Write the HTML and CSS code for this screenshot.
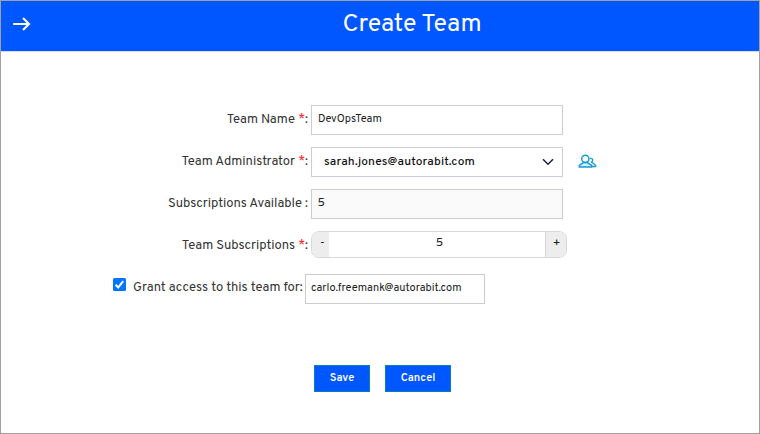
FILE: index.html
```html
<!DOCTYPE html>
<html lang="en">
<head>
<meta charset="utf-8">
<title>Create Team</title>
<link rel="stylesheet" href="styles.css">
</head>
<body>
<div class="page">
  <header class="header">
    <svg class="arrow" width="20" height="16" viewBox="0 0 20 16"><path d="M1.2 8H17M11 2l6 6-6 6" fill="none" stroke="#fff" stroke-width="2"/></svg>
    <h1 class="title">Create Team</h1>
  </header>
  <form class="form">
    <div class="row">
      <label class="label">Team Name <span class="req">*</span>:</label>
      <div class="field"><span>DevOpsTeam</span></div>
    </div>
    <div class="row">
      <label class="label">Team Administrator <span class="req">*</span>:</label>
      <div class="field select"><span>sarah.jones@autorabit.com</span>
        <svg width="12" height="8" viewBox="0 0 12 8"><path d="M1 1.2l5 5 5-5" fill="none" stroke="#1b1f4b" stroke-width="1.5"/></svg>
      </div>
      <svg class="users" width="19" height="15" viewBox="0 0 19 15" fill="none" stroke="#189bd7" stroke-width="1.5"><circle cx="7.3" cy="4.8" r="3.6"/><path d="M5.4 8.6L1.3 11.4V13h12.4v-1.6L9.4 8.6z" fill="#189bd7" fill-opacity=".2"/><path d="M11.9 4.6c1.3-.6 2.8.1 2.8 1.5 0 1-.5 1.5-1.2 2l4.1 3.1v1.3h-3.5" stroke-width="1.3"/></svg>
    </div>
    <div class="row">
      <label class="label">Subscriptions Available :</label>
      <div class="field readonly"><span>5</span></div>
    </div>
    <div class="row">
      <label class="label">Team Subscriptions <span class="req">*</span>:</label>
      <div class="stepper"><span class="minus">-</span><span class="count">5</span><span class="plus">+</span></div>
    </div>
    <div class="row grant">
      <svg class="check" width="13" height="13" viewBox="0 0 13 13"><rect width="13" height="13" rx="1.5" fill="#0075ff"/><path d="M2.6 6.8l2.6 2.6 5-6.2" fill="none" stroke="#fff" stroke-width="2"/></svg>
      <label class="label">Grant access to this team for:</label>
      <div class="field short"><span>carlo.freemank@autorabit.com</span></div>
    </div>
    <div class="actions"><button type="button" class="btn save">Save</button><button type="button" class="btn cancel">Cancel</button></div>
  </form>
</div>
</body>
</html>
```
FILE: styles.css
```css
* { box-sizing: border-box; }
body { margin: 0; font-family: Overpass, "Noto Sans", sans-serif; font-size: 13px; color: #333; }
.page { width: 760px; height: 434px; border: 1px solid #a0a0a0; background: #fff; overflow: hidden; }
.header { display: flex; align-items: center; height: 51px; padding: 0 11px; background: #0057ff; border-bottom: 1px solid #d5deec; }
.arrow { margin-top: -4px; }
.title { flex: 1; margin: -3px 0 0; padding-left: 44px; text-align: center; font-size: 25px; font-weight: 400; line-height: 32px; color: #fff; }
.form { display: flex; flex-direction: column; gap: 12px; padding-top: 53px; }
.row { display: flex; height: 30px; }
.label { width: 307px; margin-right: 3px; text-align: right; line-height: 30px; white-space: nowrap; }
.req { color: #f22; }
.field { display: flex; width: 252px; height: 30px; padding: 0 6px; border: 1px solid #ccc; font-size: 11px; line-height: 27px; color: #222; white-space: nowrap; }
.select { justify-content: space-between; padding: 0 8px 0 12px; border-color: #ccccd6; font-size: 12px; font-weight: 500; letter-spacing: .15px; line-height: 28px; color: #111; }
.select svg { margin-top: 10px; }
.users { margin: 7px 0 0 15px; }
.readonly { padding-left: 5.5px; font-size: 12px; background: #fafafa; }
.stepper { display: flex; width: 256px; height: 27px; border: 1px solid #d8d8d8; border-radius: 8px; overflow: hidden; font-size: 12px; line-height: 22px; text-align: center; color: #222; }
.minus { width: 17px; padding-left: 4px; background: #ededed; }
.count { flex: 1; padding-left: 5px; }
.plus { width: 21px; padding-left: 1px; border-left: 1px solid #d8d8d8; background: #ededed; }
.grant { margin-top: 1px; padding-left: 112px; }
.check { margin: 4px 7px 0 0; }
.grant .label { width: 169px; margin-right: 3px; line-height: 28px; }
.short { width: 180px; padding: 0 5px; }
.actions { display: flex; gap: 15px; margin: 49px 0 0 313px; }
.btn { height: 27px; padding: 0 0 2px; border: 1px solid #087fae; background: #0057ff; color: #fff; font: 600 11px/22px Overpass, "Noto Sans", sans-serif; }
.save { width: 56px; }
.cancel { width: 66px; }
```
